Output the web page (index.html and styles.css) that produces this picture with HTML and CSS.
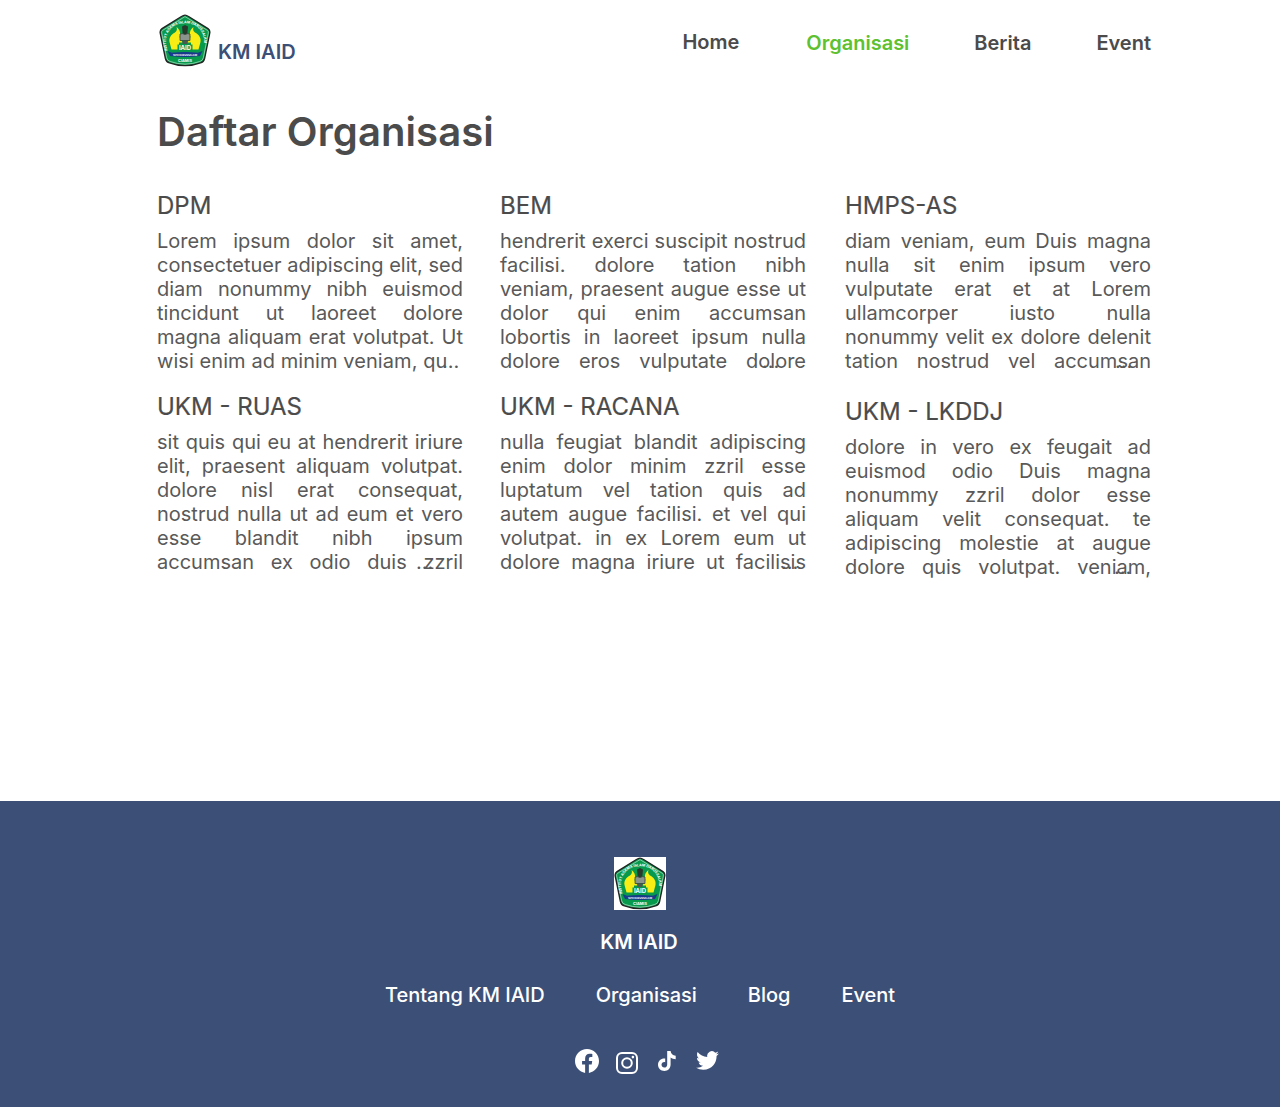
FILE: index.html
```html
<!DOCTYPE html>
<html lang="id">
<head>
<meta charset="utf-8">
<title>Daftar Organisasi - KM IAID</title>
<link rel="stylesheet" href="styles.css">
</head>
<body>
<svg class="defs" width="52" height="53" aria-hidden="true">
  <symbol id="emblem" viewBox="0 0 52 53">
    <path d="M26 1.2Q27.5 1.2 30 2.8L49 14.6Q51.3 16.4 50.8 19L45.6 44.5Q44.8 48 41.5 48.8Q26 54.6 10.500 48.8Q7.2 48 6.4 44.5L1.2 19Q.7 16.4 3 14.6L22 2.8Q24.500 1.2 26 1.200Z" fill="#07994c" stroke="#222" stroke-width="1.300"/>
    <path d="M26 2.600L48.300 16.300Q49.700 17.300 49.300 19L44.400 43.500Q44 46.600 40.800 47.500Q26 52.800 11.200 47.500Q8 46.600 7.600 43.500L2.700 19Q2.300 17.300 3.700 16.300Z" fill="none" stroke="#d8eee0" stroke-width=".6"/>
    <path id="ring" d="M8.500 36.500C3.500 22 11 9.300 26 9.300S48.500 22 43.500 36.500" fill="none"/>
    <text class="emblem-ring"><textPath href="#ring" textLength="70" lengthAdjust="spacingAndGlyphs">INSTITUT AGAMA ISLAM DARUSSALAM</textPath></text>
    <path d="M17.500 13C21 15.500 22 19.500 20.500 23L23.500 28.500H20V35.500H12.500L10.500 28C9.800 24 12 20.500 16 18.500C18 17 18.300 15 17.500 13ZM34.500 13C31 15.500 30 19.500 31.500 23L28.500 28.500H32V35.500H39.500L41.500 28C42.200 24 40 20.500 36 18.500C34 17 33.700 15 34.500 13Z" fill="#f8ed14"/>
    <path d="M23 12.500L26 11L29 12.500L28.300 20H23.700Z" fill="#28392c"/>
    <path d="M21 20Q23.500 19 26 20.600Q28.500 19 31 20V26.500H21Z" fill="#8b948d" stroke="#29392f" stroke-width=".7"/>
    <path d="M23.500 26.500H28.500V30H23.500Z" fill="#4a584e"/>
    <rect x="18.500" y="30.500" width="15" height="6" fill="#07994c"/>
    <text x="26" y="36.200" class="emblem-name">IAID</text>
    <path d="M8.500 37L13 38.800Q26 37 39 38.800L43.500 37L41 42Q26 43.800 11 42Z" fill="#18398c"/>
    <text x="26" y="41.600" class="emblem-ribbon">1970 DARUSSALAM</text>
    <text x="26" y="47.600" class="emblem-city">CIAMIS</text>
  </symbol>
</svg>

<header class="header">
  <a class="brand"><svg class="brand-logo"><use href="#emblem"/></svg><span>KM IAID</span></a>
  <nav class="nav">
    <a class="nav-home">Home</a>
    <a class="nav-active">Organisasi</a>
    <a class="nav-berita">Berita</a>
    <a>Event</a>
  </nav>
</header>

<main class="main">
  <h1>Daftar Organisasi</h1>
  <div class="columns">
    <div class="column">
      <article>
        <h2>DPM</h2>
        <p><span>Lorem ipsum dolor sit amet,</span><span>consectetuer adipiscing elit, sed</span><span>diam nonummy nibh euismod</span><span>tincidunt ut laoreet dolore</span><span>magna aliquam erat volutpat. Ut</span><span class="cut">wisi enim ad minim veniam, qu<i class="more more-dpm">…</i></span></p>
      </article>
      <article>
        <h2>UKM - RUAS</h2>
        <p><span>sit quis qui eu at hendrerit iriure</span><span>elit, praesent aliquam volutpat.</span><span>dolore nisl erat consequat,</span><span>nostrud nulla ut ad eum et vero</span><span>esse blandit nibh ipsum</span><span>accumsan ex odio duis zzril<i class="more more-ruas">…</i></span></p>
      </article>
    </div>
    <div class="column">
      <article>
        <h2>BEM</h2>
        <p><span>hendrerit exerci suscipit nostrud</span><span>facilisi. dolore tation nibh</span><span>veniam, praesent augue esse ut</span><span>dolor qui enim accumsan</span><span>lobortis in laoreet ipsum nulla</span><span>dolore eros vulputate dolore<i class="more more-bem">…</i></span></p>
      </article>
      <article>
        <h2>UKM - RACANA</h2>
        <p><span>nulla feugiat blandit adipiscing</span><span>enim dolor minim zzril esse</span><span>luptatum vel tation quis ad</span><span>autem augue facilisi. et vel qui</span><span>volutpat. in ex Lorem eum ut</span><span>dolore magna iriure ut facilisis<i class="more more-racana">…</i></span></p>
      </article>
    </div>
    <div class="column column-last">
      <article>
        <h2>HMPS-AS</h2>
        <p><span>diam veniam, eum Duis magna</span><span>nulla sit enim ipsum vero</span><span>vulputate erat et at Lorem</span><span>ullamcorper iusto nulla</span><span>nonummy velit ex dolore delenit</span><span>tation nostrud vel accumsan<i class="more more-hmps">…</i></span></p>
      </article>
      <article>
        <h2>UKM - LKDDJ</h2>
        <p><span>dolore in vero ex feugait ad</span><span>euismod odio Duis magna</span><span>nonummy zzril dolor esse</span><span>aliquam velit consequat. te</span><span>adipiscing molestie at augue</span><span>dolore quis volutpat. veniam,<i class="more more-lkddj">…</i></span></p>
      </article>
    </div>
  </div>
</main>

<footer class="footer">
  <svg class="footer-logo"><use href="#emblem"/></svg>
  <strong>KM IAID</strong>
  <nav class="footer-nav"><a>Tentang KM IAID</a><a>Organisasi</a><a>Blog</a><a>Event</a></nav>
  <div class="social">
    <svg class="facebook" viewBox="0 0 24 24"><path d="M24 12.073C24 5.446 18.627.073 12 .073S0 5.446 0 12.073c0 5.990 4.388 10.954 10.125 11.854v-8.385H7.078v-3.470h3.047V9.430c0-3.007 1.792-4.669 4.533-4.669 1.312 0 2.686.235 2.686.235v2.953H15.830c-1.491 0-1.956.925-1.956 1.874v2.250h3.328l-.532 3.470h-2.796v8.385C19.612 23.027 24 18.062 24 12.073z"/></svg>
    <svg class="instagram" viewBox="0 0 22 22"><rect x="1" y="1" width="20" height="20" rx="5"/><circle cx="11" cy="11" r="4.800"/><circle class="dot" cx="16.900" cy="5.100" r="1.300"/></svg>
    <svg class="tiktok" viewBox="0 0 18 20"><path d="M9.200 0H12.600C12.800 2.700 14.700 4.600 17.700 4.800V8.200C15.800 8.200 14 7.600 12.600 6.500V13.600C12.600 17.400 9.900 20 6.400 20C2.800 20 0 17.300 0 13.800C0 10 3.200 7.100 7.200 7.600V11.200C5.100 10.700 3.500 12 3.500 13.800C3.500 15.400 4.800 16.600 6.300 16.600C8 16.600 9.200 15.400 9.200 13.500Z"/></svg>
    <svg class="twitter" viewBox="0 0 24 20"><path d="M23.953 2.570a10 10 0 01-2.825.775 4.958 4.958 0 002.163-2.723c-.951.555-2.005.959-3.127 1.184a4.920 4.920 0 00-8.384 4.482C7.690 6.095 4.067 4.130 1.640 1.162a4.822 4.822 0 00-.666 2.475c0 1.710.870 3.213 2.188 4.096a4.904 4.904 0 01-2.228-.616v.060a4.923 4.923 0 003.946 4.827 4.996 4.996 0 01-2.212.085 4.936 4.936 0 004.604 3.417 9.867 9.867 0 01-6.102 2.105c-.390 0-.779-.023-1.170-.067a13.995 13.995 0 007.557 2.209c9.053 0 13.998-7.496 13.998-13.985 0-.210 0-.420-.015-.630A9.935 9.935 0 0024 2.590z"/></svg>
  </div>
</footer>
</body>
</html>
```

FILE: styles.css
```css
* { box-sizing: border-box; }
body {
  margin: 0;
  min-height: 1107px;
  display: flex;
  flex-direction: column;
  background: #fff;
  color: #4b4b4b;
  font-family: Inter, sans-serif;
  font-size: 20px;
  line-height: 24px;
}
h1, h2, p { margin: 0; }
.defs { display: block; margin-bottom: -53px; }
.header {
  height: 80px;
  padding: 14px 129px 0 159px;
  display: flex;
  justify-content: space-between;
}
.brand { display: flex; gap: 7px; color: #3c5077; font-weight: 600; }
.brand span { padding-top: 26px; }
.brand-logo { width: 52px; height: 53px; }
.nav { display: flex; padding-top: 17px; font-weight: 600; }
.nav-home { margin: -1px 67px 0 0; }
.nav-active { margin-right: 65px; color: #5dc131; }
.nav-berita { margin-right: 65px; }
.main { flex: 1; padding: 28px 129px 0 157px; }
h1 { font-size: 40px; line-height: 48px; font-weight: 600; letter-spacing: .1px; }
.columns { display: grid; grid-template-columns: 306px 306px 306px; column-gap: 37px; padding-top: 34px; }
.column { display: flex; flex-direction: column; gap: 16px; }
.column-last { gap: 21px; margin-left: 2px; width: 306px; }
h2 { font-size: 24px; line-height: 29px; font-weight: 400; padding: 1px 0 9px; height: 39px; -webkit-text-stroke: .2px #4b4b4b; }
p { font-weight: 400; height: 146px; color: #595959; }
p span { display: block; position: relative; white-space: nowrap; text-align: justify; text-align-last: justify; }
.cut { text-align-last: left; letter-spacing: .07px; }
.more { position: absolute; top: 0; font-style: normal; }
.more-dpm { left: 285px; }
.more-ruas { left: 259px; }
.more-bem { left: 262px; }
.more-racana { left: 281px; }
.more-hmps { left: 270px; }
.more-lkddj { left: 269px; }
.footer {
  height: 306px;
  padding-top: 56px;
  display: flex;
  flex-direction: column;
  align-items: center;
  background: #3c5077;
  color: #fff;
}
.footer-logo { width: 52px; height: 53px; background: #fff; }
.footer strong { margin: 20px 2px 0 0; font-weight: 600; letter-spacing: -.05px; }
.footer-nav { display: flex; gap: 51px; padding-top: 29px; font-weight: 500; letter-spacing: -.03px; }
.social { display: flex; align-items: flex-start; padding: 41px 0 0 13px; }
.social svg { fill: #fff; }
.facebook { width: 24px; height: 24px; margin-top: 1px; }
.social .instagram { width: 22px; height: 22px; margin: 4px 20px 0 17px; fill: none; stroke: #fff; stroke-width: 2; }
.instagram .dot { fill: #fff; stroke: none; }
.tiktok { width: 18px; height: 20px; margin: 3px 20px 0 0; }
.twitter { width: 23px; height: 19px; margin-top: 3px; }
text { fill: #fff; font-family: Inter, sans-serif; text-anchor: middle; font-weight: 700; }
.emblem-ring { font-size: 3.600px; text-anchor: start; }
.emblem-name { font-size: 6px; }
.emblem-ribbon { font-size: 2.500px; }
.emblem-city { font-size: 3.800px; }
```
